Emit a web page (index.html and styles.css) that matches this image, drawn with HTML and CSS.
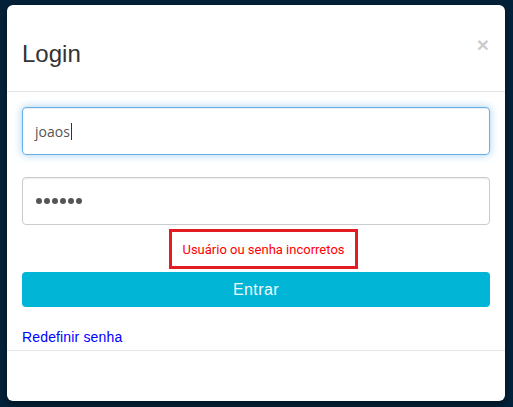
FILE: index.html
```html
<!DOCTYPE html>
<html lang="pt">
<head>
<meta charset="utf-8">
<title>Login</title>
<link rel="stylesheet" href="styles.css">
</head>
<body>
<div class="backdrop">
  <div class="modal">
    <div class="modal-header">
      <h4 class="title">Login</h4>
      <span class="close">&times;</span>
    </div>
    <div class="modal-body">
      <div class="field focused"><span class="value">joaos</span><span class="caret"></span></div>
      <div class="field password"><span class="dot"></span><span class="dot"></span><span class="dot"></span><span class="dot"></span><span class="dot"></span><span class="dot"></span></div>
      <div class="error-row"><div class="error">Usuário ou senha incorretos</div></div>
      <button class="btn">Entrar</button>
      <a class="link" href="#">Redefinir senha</a>
    </div>
    <div class="modal-footer"></div>
  </div>
</div>
</body>
</html>
```
FILE: styles.css
```css
html, body {
  margin: 0;
  height: 407px;
  overflow: hidden;
}
body {
  background: #03223a;
  font-family: "Liberation Sans", Arial, sans-serif;
}
.backdrop {
  padding: 5px 8px 6px 7px;
}
.modal {
  background: #fff;
  border-radius: 6px;
  height: 396px;
  display: flex;
  flex-direction: column;
  box-shadow: 0 3px 9px rgba(0, 0, 0, 0.5);
}
.modal-header {
  display: flex;
  justify-content: space-between;
  align-items: flex-start;
  padding: 36px 15px 25px;
  border-bottom: 1px solid #e5e5e5;
}
.title {
  margin: 0;
  font-size: 24px;
  line-height: 25px;
  font-weight: normal;
  color: #333;
}
.close {
  font-size: 21px;
  line-height: 21px;
  font-weight: bold;
  color: #000;
  opacity: 0.2;
  margin-top: -7px;
  margin-right: 1px;
}
.modal-body {
  padding: 15px 15px 3px;
  display: flex;
  flex-direction: column;
}
.field {
  box-sizing: border-box;
  height: 48px;
  border: 1px solid #ccc;
  border-radius: 4px;
  padding: 0 12px;
  display: flex;
  align-items: center;
  font-family: "Open Sans", sans-serif;
  font-size: 14px;
  color: #555;
  box-shadow: inset 0 1px 1px rgba(0, 0, 0, 0.075);
}
.field.focused {
  border-color: #66afe9;
  box-shadow: inset 0 1px 1px rgba(0, 0, 0, 0.075), 0 0 8px rgba(102, 175, 233, 0.6);
  margin-bottom: 22px;
}
.caret {
  width: 1px;
  height: 17px;
  background: #333;
  margin-left: 1px;
}
.password {
  gap: 2px;
  padding-left: 13px;
}
.dot {
  width: 6px;
  height: 6px;
  border-radius: 50%;
  background: #555;
}
.error-row {
  display: flex;
  justify-content: center;
  padding-left: 15px;
  margin: 4px 0 3px;
}
.error {
  box-sizing: border-box;
  width: 189px;
  height: 40px;
  border: 3px solid #e31b23;
  color: #f00;
  font-family: Roboto, "Liberation Sans", sans-serif;
  font-size: 13px;
  display: flex;
  align-items: center;
  justify-content: center;
  padding-top: 1px;
}
.btn {
  height: 35px;
  border: 0;
  border-radius: 4px;
  background: #00b5d6;
  color: #f4f8fc;
  font-family: "Liberation Sans", Arial, sans-serif;
  font-size: 16px;
  letter-spacing: 0.4px;
  padding: 0;
}
.link {
  margin-top: 20px;
  font-size: 14px;
  line-height: 20px;
  letter-spacing: 0.15px;
  color: #0000ff;
  text-decoration: none;
  align-self: flex-start;
}
.modal-footer {
  flex: 1;
  border-top: 1px solid #e5e5e5;
}
```
